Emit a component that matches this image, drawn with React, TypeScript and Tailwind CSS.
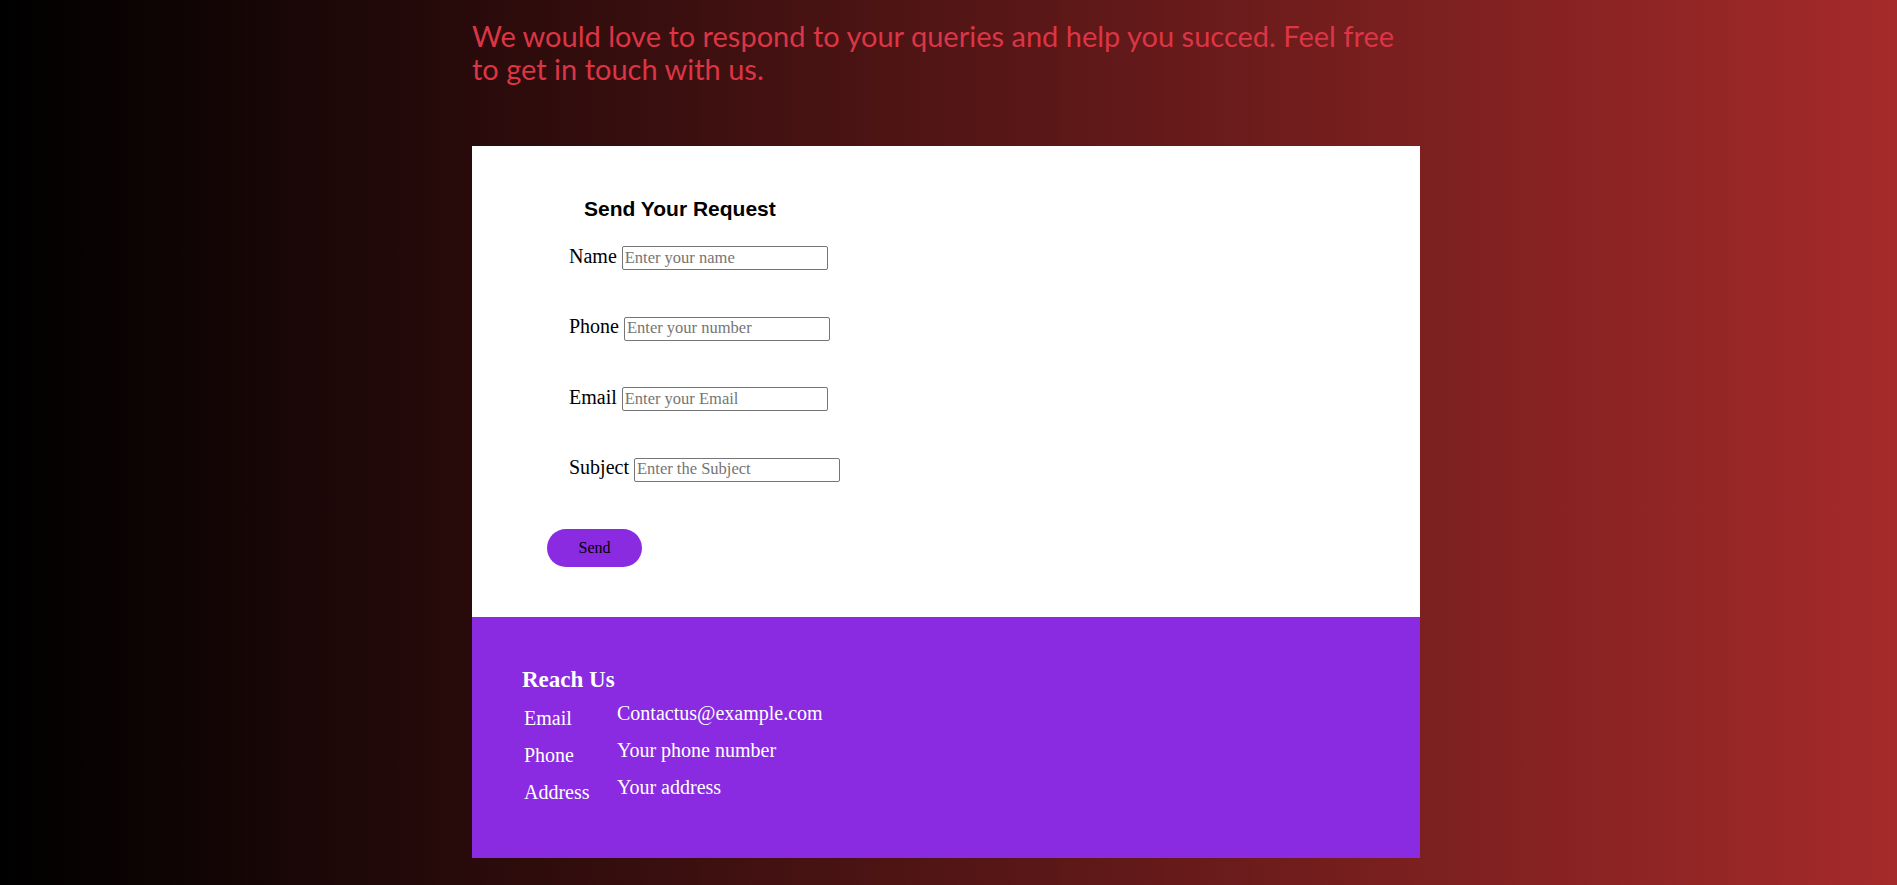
import React from 'react'

const fields = [
  { label: 'Name', placeholder: 'Enter your name' },
  { label: 'Phone', placeholder: 'Enter your number' },
  { label: 'Email', placeholder: 'Enter your Email' },
  { label: 'Subject', placeholder: 'Enter the Subject' },
]

const contacts = [
  { label: 'Email', value: 'Contactus@example.com' },
  { label: 'Phone', value: 'Your phone number' },
  { label: 'Address', value: 'Your address' },
]

function App() {
  return (
    <div className="min-h-screen bg-[linear-gradient(to_right,black,brown)] pb-[29px]">
      <div className="ml-[472px] w-[948px]">
        <p className="pt-[19px] font-['Lato',sans-serif] text-[29px] leading-[33px] text-[#dc3545]">
          We would love to respond to your queries and help you succed. Feel free to get in touch with us.
        </p>

        <div className="mt-[61px] bg-white pt-[51px] pb-[50px] pl-[75px]">
          <h3 className="ml-[37px] font-['Liberation_Sans',Arial,sans-serif] text-[21px] leading-[24px] font-bold text-black">
            Send Your Request
          </h3>
          <form className="mt-[25px] flex flex-col" onSubmit={(e) => e.preventDefault()}>
            <div className="ml-[22px] flex flex-col gap-[46px]">
              {fields.map((f) => (
                <div key={f.label} className="flex items-baseline gap-[5px] font-['Liberation_Serif',serif] text-black">
                  <label className="text-[20px] leading-[20px]">{f.label}</label>
                  <input
                    type="text"
                    placeholder={f.placeholder}
                    className="h-[24px] w-[206px] rounded-[2px] border border-[#767676] px-[2px] py-[1px] font-['Liberation_Serif',serif] text-[16.5px] placeholder:text-[#757575]"
                  />
                </div>
              ))}
            </div>
            <button
              type="submit"
              className="mt-[47px] h-[38px] w-[95px] rounded-full bg-[#8a2be2] font-['Liberation_Serif',serif] text-[16px] text-black"
            >
              Send
            </button>
          </form>
        </div>

        <div className="bg-[#8a2be2] px-[50px] pt-[50px] pb-[47px] font-['Liberation_Serif',serif] text-white">
          <h2 className="text-[23px] leading-[26px] font-bold">Reach Us</h2>
          <div className="mt-[2px] flex">
            <div className="ml-[2px] w-[93px] pt-[5px]">
              {contacts.map((c) => (
                <div key={c.label} className="text-[20px] leading-[37px]">{c.label}</div>
              ))}
            </div>
            <div>
              {contacts.map((c) => (
                <div key={c.label} className="text-[20px] leading-[37px]">{c.value}</div>
              ))}
            </div>
          </div>
        </div>
      </div>
    </div>
  )
}

export default App
